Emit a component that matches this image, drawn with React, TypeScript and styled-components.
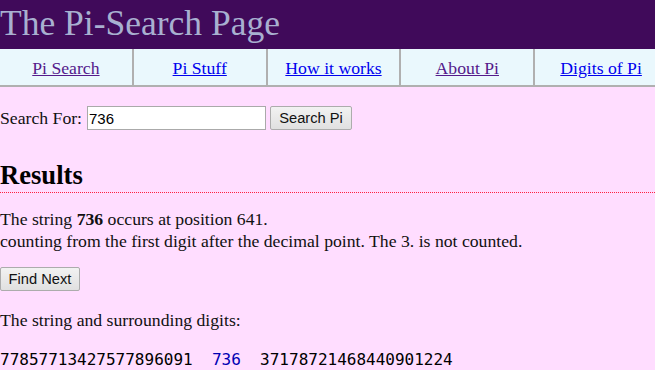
import styled, { createGlobalStyle } from 'styled-components';

const GlobalStyle = createGlobalStyle`
  html, body {
    margin: 0;
    padding: 0;
    background: #ffddff;
    overflow: hidden;
  }
  body {
    font-family: "Liberation Serif", "Times New Roman", serif;
    font-size: 17.7px;
    color: #111;
  }
`;

const Page = styled.div`
  width: 667px;
`;

const Header = styled.div`
  background: #400a5a;
  height: 49px;
  display: flex;
  align-items: center;
`;

const Title = styled.h1`
  margin: 0;
  font-weight: 400;
  font-size: 35.5px;
  color: #a8b0d0;
  line-height: 1;
  padding-bottom: 2px;
`;

const Nav = styled.div`
  display: flex;
  background: #eaf8fd;
  border-bottom: 2px solid #b0b0b0;
`;

const NavCell = styled.div`
  width: 133px;
  height: 36px;
  display: flex;
  align-items: center;
  justify-content: center;
  border-right: 2px solid #b0b0b0;
  &:last-child {
    border-right: 0;
  }
`;

const NavLink = styled.a<{ $visited?: boolean }>`
  color: ${(p) => (p.$visited ? '#551a8b' : '#0000ee')};
  text-decoration: underline;
  margin-top: 2px;
`;

const SearchRow = styled.form`
  display: flex;
  align-items: center;
  margin-top: 19px;
  height: 24px;
`;

const Label = styled.span`
  margin-right: 5px;
`;

const SearchInput = styled.input`
  width: 179px;
  height: 24px;
  box-sizing: border-box;
  border: 1px solid #aaa;
  padding: 0 1px;
  font-family: "Liberation Sans", Arial, sans-serif;
  font-size: 15px;
  color: #000;
  background: #fff;
  margin-right: 4px;
`;

const Button = styled.button`
  height: 24px;
  box-sizing: border-box;
  border: 1px solid #acacac;
  border-radius: 2px;
  background: linear-gradient(#f2f2f2, #e0e0e0);
  font-family: "Liberation Sans", Arial, sans-serif;
  font-size: 14.7px;
  color: #111;
  padding: 0 6px;
`;

const SearchButton = styled(Button)`
  width: 82px;
`;

const ResultsTitle = styled.h2`
  margin: 31px 0 0;
  font-size: 26.6px;
  font-weight: 700;
  line-height: 28px;
  padding-bottom: 3px;
  border-bottom: 1px dotted #ff2040;
  color: #000;
`;

const Para = styled.p<{ $gap?: number }>`
  margin: ${(p) => p.$gap ?? 15}px 0 0;
  line-height: 22px;
`;

const FindRow = styled.div`
  margin-top: 15px;
`;

const FindButton = styled(Button)`
  width: 80px;
`;

const Digits = styled.pre`
  margin: 19px 0 0;
  font-family: "DejaVu Sans Mono", "Liberation Mono", monospace;
  font-size: 16px;
  color: #000;
`;

const Match = styled.span`
  color: #0000b4;
`;

const links = [
  { label: 'Pi Search', visited: true },
  { label: 'Pi Stuff' },
  { label: 'How it works' },
  { label: 'About Pi', visited: true },
  { label: 'Digits of Pi' },
];

export default function App() {
  return (
    <Page>
      <GlobalStyle />
      <Header>
        <Title>The Pi-Search Page</Title>
      </Header>
      <Nav>
        {links.map((l) => (
          <NavCell key={l.label}>
            <NavLink href="#" $visited={l.visited}>
              {l.label}
            </NavLink>
          </NavCell>
        ))}
      </Nav>
      <SearchRow onSubmit={(e) => e.preventDefault()}>
        <Label>Search For:</Label>
        <SearchInput type="text" defaultValue="736" />
        <SearchButton type="submit">Search Pi</SearchButton>
      </SearchRow>
      <ResultsTitle>Results</ResultsTitle>
      <Para>
        The string <b>736</b> occurs at position 641.
        <br />
        counting from the first digit after the decimal point. The 3. is not counted.
      </Para>
      <FindRow>
        <FindButton type="button">Find Next</FindButton>
      </FindRow>
      <Para $gap={18}>The string and surrounding digits:</Para>
      <Digits>
        77857713427577896091  <Match>736</Match>  37178721468440901224
      </Digits>
    </Page>
  );
}
